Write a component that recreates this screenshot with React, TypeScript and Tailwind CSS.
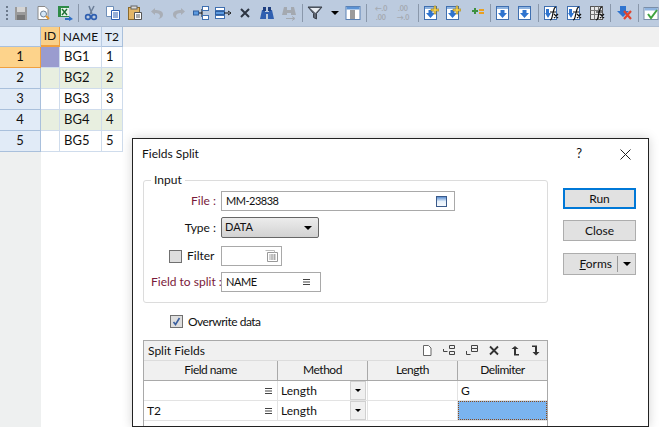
import React from 'react'

const Sep = () => <div className="w-px h-[18px] bg-[#8a98ab] -mx-[1.5px] shrink-0" />

const Ico = ({ w = 16, className = '', children }: { w?: number; className?: string; children: React.ReactNode }) => (
  <svg width={w} height="16" viewBox={`0 0 ${w} 16`} className={`shrink-0 ${className}`}>
    {children}
  </svg>
)

const BlueDown = () => (
  <>
    <rect x="1.5" y="1.5" width="12" height="13" fill="#fff" stroke="#3f6fb0" />
    <rect x="2" y="2" width="11" height="2" fill="#8fb4e0" />
    <path d="M5.5 5h4v3h2.5l-4.5 5L3 8h2.5z" fill="#2f74cf" />
  </>
)

const Fx = ({ grid }: { grid?: boolean }) => (
  <>
    <rect x="1.5" y="1.5" width="12" height="13" fill={grid ? '#e8e8e8' : '#fff'} stroke={grid ? '#555' : '#3f6fb0'} />
    {grid ? (
      <path d="M1.5 5.5h12M1.5 9.5h12M5.5 1.5v13M9.5 1.5v13" stroke="#777" />
    ) : (
      <path d="M3 4h3v4h2l-3 5-3-5h1z" fill="#2f74cf" />
    )}
    <path d="M7 15c2 0 2-3 3-7s1-6 3-6M7 7h6M11 9l4 4M15 9l-4 4" stroke="#111" strokeWidth="1.2" fill="none" />
  </>
)

const toolbar: React.ReactNode[] = [
  <Ico key="save">
    <path d="M2 2h12v13H2z" fill="#9a9a9a" />
    <rect x="4" y="2" width="8" height="5" fill="#d4d4d4" />
    <rect x="4" y="10" width="8" height="5" fill="#777" />
  </Ico>,
  <Ico key="preview">
    <path d="M3 1.5h7l3 3v10H3z" fill="#fff" stroke="#8a8a8a" />
    <circle cx="8.5" cy="9" r="3" fill="#d5e7f7" stroke="#6a7f95" />
    <path d="M11 11l3 3" stroke="#e69a2e" strokeWidth="2" />
  </Ico>,
  <Ico key="excel">
    <rect x="1" y="1" width="11" height="11" fill="#2e8b47" />
    <rect x="4" y="3" width="8" height="8" fill="#e8f3ea" />
    <path d="M5 4l5 6M10 4l-5 6" stroke="#1e7034" strokeWidth="1.4" />
    <path d="M8 13h4v-2l4 3-4 2v-1H8z" fill="#2f6fc5" />
  </Ico>,
  <Sep key="s1" />,
  <Ico key="cut">
    <path d="M6 1l3 8M11 1L7 9" stroke="#6c7f98" strokeWidth="1.5" />
    <circle cx="5" cy="12" r="2.4" fill="none" stroke="#2f5fb0" strokeWidth="1.6" />
    <circle cx="11" cy="12" r="2.4" fill="none" stroke="#2f5fb0" strokeWidth="1.6" />
  </Ico>,
  <Ico key="copy">
    <path d="M1.5 1.5h7v10h-7z" fill="#fff" stroke="#6f8fb8" />
    <path d="M6.5 5.5h8v9h-8z" fill="#fff" stroke="#2f5fb0" />
    <path d="M8 8h5M8 10h5M8 12h5" stroke="#2f5fb0" />
  </Ico>,
  <Ico key="paste">
    <rect x="1.5" y="2.5" width="11" height="12" fill="#e3b667" stroke="#8b6a2c" />
    <rect x="4" y="1" width="6" height="3" fill="#d9d9d9" stroke="#666" />
    <path d="M7.5 7.5h7v7h-7z" fill="#fff" stroke="#555" />
    <path d="M9 10h4M9 12h4" stroke="#555" />
  </Ico>,
  <Ico key="undo">
    <path d="M6 3L2 6.5 6 10V8c3 0 5 1 5 3 0 1.500-1 2.500-2 3 3-.5 5-2 5-4.500C14 6 10 5 6 5z" fill="#a9aeb6" />
  </Ico>,
  <Ico key="redo">
    <path d="M10 3l4 3.500L10 10V8c-3 0-5 1-5 3 0 1.500 1 2.500 2 3-3-.5-5-2-5-4.500C2 6 6 5 10 5z" fill="#a9aeb6" />
  </Ico>,
  <Ico key="split">
    <rect x="0.500" y="6" width="5" height="4" fill="#5d9be0" stroke="#2f5fa0" />
    <path d="M6 8h3M9 4v8" stroke="#111" />
    <rect x="9.500" y="1.500" width="6" height="4" fill="#fff" stroke="#3f6fb0" />
    <rect x="9.500" y="10.500" width="6" height="4" fill="#fff" stroke="#3f6fb0" />
  </Ico>,
  <Ico key="merge">
    <rect x="0.500" y="2.500" width="9" height="3" fill="#fff" stroke="#3f6fb0" />
    <rect x="0.500" y="6.500" width="9" height="3" fill="#5d9be0" stroke="#2f5fa0" />
    <rect x="0.500" y="10.500" width="9" height="3" fill="#fff" stroke="#3f6fb0" />
    <path d="M9 8h5M13 6l3 2-3 2" stroke="#111" fill="none" />
  </Ico>,
  <Ico key="x">
    <path d="M4 4l8 8M12 4l-8 8" stroke="#2d3542" strokeWidth="2" />
  </Ico>,
  <Ico key="find">
    <path d="M3 5h3v2h4V5h3l2 9H9V9H7v5H1z" fill="#2f5fb0" />
    <rect x="4" y="2" width="3" height="4" fill="#1f3f80" />
    <rect x="9" y="2" width="3" height="4" fill="#1f3f80" />
  </Ico>,
  <Ico key="findnext">
    <path d="M3 2h3v8H1zM10 2h3l2 8h-5zM6 5h4v3H6z" fill="#a4a9b0" />
    <path d="M5 13.500h8M11 11.500l3 2-3 2" stroke="#a4a9b0" fill="none" />
  </Ico>,
  <Sep key="s2" />,
  <Ico key="filter">
    <path d="M1 2h14L9.500 8.500V14l-3-1.500v-4z" fill="#5d6470" stroke="#3a404a" />
    <path d="M3 3h10L8.500 8z" fill="#e9edf2" />
  </Ico>,
]

const toolbarRight: React.ReactNode[] = [
  <Ico key="table">
    <rect x="1" y="1.500" width="14" height="13" fill="#fff" stroke="#5b82b5" />
    <rect x="1.500" y="2" width="13" height="2.500" fill="#5b92d4" />
    <rect x="5" y="5" width="5" height="9" fill="#9b9b9b" />
  </Ico>,
  <Sep key="s3" />,
  <div key="d1" className="w-[20px] flex flex-col items-center text-[7px] leading-[9px] font-bold text-[#a4a9b0] shrink-0">
    <span>←.0</span>
    <span>.00</span>
  </div>,
  <div key="d2" className="w-[20px] -ml-[4px] flex flex-col items-center text-[7px] leading-[9px] font-bold text-[#a4a9b0] shrink-0">
    <span>.00</span>
    <span>→.0</span>
  </div>,
  <Sep key="s4" />,
  <Ico key="add1">
    <BlueDown />
    <path d="M11 1h2v3h3v2h-3v3h-2V6H8V4h3z" fill="#f3d050" stroke="#9a7d1c" strokeWidth=".6" />
  </Ico>,
  <Ico key="add2">
    <BlueDown />
    <path d="M11 1h2v3h3v2h-3v3h-2V6H8V4h3z" fill="#f3d050" stroke="#9a7d1c" strokeWidth=".6" />
  </Ico>,
  <Ico key="plus" className="ml-[2px]">
    <path d="M3 5h2V3h2v2h2v2H7v2H5V7H3z" fill="#3d9140" />
    <path d="M10 4h5v2h-5zM10 7h5v2h-5z" fill="#eaa022" />
  </Ico>,
  <Sep key="s5" />,
  <Ico key="down1">
    <BlueDown />
  </Ico>,
  <Ico key="down2">
    <BlueDown />
  </Ico>,
  <Sep key="s6" />,
  <Ico key="fx1">
    <Fx />
  </Ico>,
  <Ico key="fx2" className="ml-[1px]">
    <Fx />
  </Ico>,
  <Ico key="fx3" className="ml-[1px]">
    <Fx grid />
  </Ico>,
  <Sep key="s7" />,
  <Ico key="del" className="ml-[2px]">
    <path d="M3 1h6v5h3l-6 6-6-6h3z" fill="#2f74cf" />
    <path d="M7 6l7 8M14 6l-7 8" stroke="#e0442e" strokeWidth="2.200" />
  </Ico>,
  <Sep key="s8" />,
  <Ico key="check">
    <rect x="1" y="2.500" width="14" height="12" fill="#fff" stroke="#7a8ea8" />
    <rect x="1.500" y="3" width="13" height="2.500" fill="#8fb4e0" />
    <path d="M5 9l3 4 6-8" stroke="#3fa33f" strokeWidth="2" fill="none" />
  </Ico>,
]

const rows = [
  { n: 1, name: 'BG1', t2: '1' },
  { n: 2, name: 'BG2', t2: '2' },
  { n: 3, name: 'BG3', t2: '3' },
  { n: 4, name: 'BG4', t2: '4' },
  { n: 5, name: 'BG5', t2: '5' },
]

const FieldIcon = () => (
  <svg width="9" height="8" viewBox="0 0 9 8" className="shrink-0">
    <path d="M1 1.500h7M1 4h7M1 6.500h7" stroke="#444" />
  </svg>
)

const Box = ({ className, children }: { className: string; children?: React.ReactNode }) => (
  <div className={`h-[20px] border border-[#a9a9a9] bg-white flex items-center ${className}`}>{children}</div>
)

const Checkbox = ({ checked }: { checked?: boolean }) => (
  <span className="w-[13px] h-[13px] border border-[#707070] bg-[#dedede] flex items-center justify-center shrink-0">
    {checked && (
      <svg width="9" height="9" viewBox="0 0 9 9">
        <path d="M1.500 5l2 2.500L7.500 1" stroke="#3a5f9f" strokeWidth="1.600" fill="none" />
      </svg>
    )}
  </span>
)

const Caret = () => <span className="w-0 h-0 block border-x-[4px] border-x-transparent border-t-[4px] border-t-black" />

const Button = ({ primary, children }: { primary?: boolean; children: React.ReactNode }) => (
  <div
    className={`w-[73px] h-[21px] bg-[#e1e1e1] flex items-center justify-center ${
      primary ? 'border-2 border-[#0078d7]' : 'border border-[#adadad]'
    }`}
  >
    {children}
  </div>
)

const grid = 'grid grid-cols-[134px_90px_90px_89px]'

const MethodCell = () => (
  <div className="border-r border-[#e3e3e3] flex items-center pl-[3px]">
    <span className="flex-1">Length</span>
    <span className="w-[16px] h-[19px] bg-[#f0f0f0] border border-[#d0d0d0] flex items-center justify-center mr-[1px]">
      <span className="w-0 h-0 block border-x-[3px] border-x-transparent border-t-[3px] border-t-black" />
    </span>
  </div>
)

export default function App() {
  return (
    <div
      className="w-[659px] h-[427px] relative overflow-hidden bg-white text-[12px] text-[#111] flex flex-col"
      style={{ fontFamily: 'Lato, "Noto Sans", sans-serif' }}
    >
      <div className="h-[27px] bg-[#bccbdf] flex items-center pl-[6px] border-b border-[#aebdd1] shrink-0">
        <div className="w-[3px] h-[14px] mr-[5px] flex flex-col justify-between">
          <span className="w-[2px] h-[2px] bg-[#6c7a8c]" />
          <span className="w-[2px] h-[2px] bg-[#6c7a8c]" />
          <span className="w-[2px] h-[2px] bg-[#6c7a8c]" />
          <span className="w-[2px] h-[2px] bg-[#6c7a8c]" />
        </div>
        <div className="flex items-center gap-[6px]">{toolbar}</div>
        <span className="ml-[8px] mr-[6px]">
          <Caret />
        </span>
        <div className="flex items-center gap-[6px]">{toolbarRight}</div>
      </div>

      <div className="flex flex-1 min-h-0">
        <div className="w-[123px] shrink-0 flex flex-col">
          <div className="grid grid-cols-[41px_19px_42px_21px] h-[20px] bg-[#e1ebf7] shrink-0">
            <div className="border-b border-r border-[#a9c0dc]" />
            <div className="bg-[#f9d08a] border-b-2 border-r border-[#f0a040] flex items-center justify-center">ID</div>
            <div className="border-b border-r border-[#b9cce4] flex items-center justify-center">NAME</div>
            <div className="border-b border-r border-[#a9c0dc] flex items-center justify-center">T2</div>
          </div>
          {rows.map((r) => {
            const even = r.n % 2 === 0
            const selected = r.n === 1
            const cell = `border-b border-r border-[#cfdcec] flex items-center ${even ? 'bg-[#e8efe0]' : 'bg-white'}`
            return (
              <div key={r.n} className="grid grid-cols-[41px_19px_42px_21px] h-[21px] text-[13px] shrink-0">
                <div
                  className={`flex items-center justify-center border-r border-b ${
                    selected ? 'bg-[#fdd38b] border-[#f0a040]' : 'bg-[#e1ebf7] border-[#a9c0dc]'
                  }`}
                >
                  {r.n}
                </div>
                <div className={selected ? 'bg-[#9a9ccf] border-b border-r border-[#cfdcec]' : cell} />
                <div className={`${cell} pl-[4px]`}>{r.name}</div>
                <div className={`${cell} pl-[4px]`}>{r.t2}</div>
              </div>
            )
          })}
          <div className="flex-1 flex">
            <div className="w-[41px] bg-[#eef0f0]" />
          </div>
        </div>
        <div className="flex-1 flex flex-col">
          <div className="h-[20px] bg-[#f0f0f0]" />
        </div>
      </div>

      <div className="absolute left-[132px] top-[138px] w-[517px] h-[289px] bg-white border border-[#222] shadow-[0_0_10px_rgba(0,0,0,0.18)] flex flex-col">
        <div className="h-[30px] mb-[4px] flex items-center pl-[9px] pr-[17px] shrink-0">
          <span className="flex-1">Fields Split</span>
          <span className="mr-[38px] text-[13px]">?</span>
          <svg width="11" height="11" viewBox="0 0 11 11">
            <path d="M.5.500l10 10M10.500.500l-10 10" stroke="#222" />
          </svg>
        </div>
        <div className="flex pl-[10px]">
          <div className="w-[405px] shrink-0">
            <fieldset className="h-[130px] border border-[#dcdcdc] rounded-[3px] pl-[7px] pr-[10px]">
              <legend className="px-[3px] leading-[14px]">Input</legend>
              <div className="grid grid-cols-[65px_1fr] items-center gap-x-[5px] mt-[4px] gap-y-[6px]">
                <span className="text-right text-[#7a1a3a]">File :</span>
                <Box className="w-[234px] pl-[4px] pr-[7px] justify-between">
                  <span className="text-[11px] tracking-[-0.5px]">MM-23838</span>
                  <span className="w-[11px] h-[11px] border border-[#3a5a8a] bg-gradient-to-b from-[#5d8fd0] via-[#e6f0fa] to-[#f5f9fd]" />
                </Box>
                <span className="text-right">Type :</span>
                <div className="w-[98px] h-[21px] border border-[#666] rounded-[2px] bg-gradient-to-b from-[#ececec] to-[#d2d2d2] flex items-center justify-between pl-[3px] pr-[6px]">
                  <span className="text-[11px]">DATA</span>
                  <Caret />
                </div>
                <div className="flex items-center justify-end gap-[5px] mt-[2px]">
                  <Checkbox />
                  <span className="w-[29px]">Filter</span>
                </div>
                <Box className="w-[61px] justify-end pr-[3px] mt-[2px]">
                  <svg width="13" height="12" viewBox="0 0 13 12">
                    <path d="M2.500 2.500h10v9h-10z" fill="#fff" stroke="#999" />
                    <path d="M.5.500h9v2" fill="none" stroke="#bbb" />
                    <path d="M4 5h7M4 7h7M4 9h7M7 4v6M9.500 4v6" stroke="#aaa" />
                  </svg>
                </Box>
                <span className="text-right text-[#7a1a3a] whitespace-nowrap">Field to split :</span>
                <Box className="w-[100px] pl-[4px] pr-[9px] justify-between">
                  <span className="text-[11px] tracking-[-0.4px]">NAME</span>
                  <FieldIcon />
                </Box>
              </div>
            </fieldset>
            <div className="h-[37px] flex items-center gap-[5px] pl-[27px]">
              <Checkbox checked />
              <span className="tracking-[-0.5px]">Overwrite data</span>
            </div>
            <div className="border border-[#a9a9a9] border-b-0 h-[86px]">
              <div className="h-[20px] bg-[#f0f0f0] flex items-center pl-[4px] pr-[6px] border-b border-[#dcdcdc]">
                <span className="flex-1">Split Fields</span>
                <div className="flex items-center gap-[11px]">
                  <svg width="10" height="11" viewBox="0 0 10 11">
                    <path d="M1.500.500h5l2.500 2.500v7.500h-7.500z" fill="#fff" stroke="#666" />
                  </svg>
                  <svg width="12" height="11" viewBox="0 0 12 11">
                    <path d="M.5 4v2.500h4M6.500.500h5v3h-5zM6.500 6.500h5v3h-5z" fill="none" stroke="#444" />
                  </svg>
                  <svg width="12" height="11" viewBox="0 0 12 11">
                    <path d="M.5 6v3.500h4M5.500.500h6v3h-6zM5.500 3.500h6v3h-6z" fill="none" stroke="#444" />
                  </svg>
                  <svg width="10" height="11" viewBox="0 0 10 11">
                    <path d="M1 1.500l8 8M9 1.500l-8 8" stroke="#333" strokeWidth="1.800" />
                  </svg>
                  <svg width="10" height="11" viewBox="0 0 10 11">
                    <path d="M5 1l3.500 3H6v5h3v1.500H4V4H1.500z" fill="#333" />
                  </svg>
                  <svg width="10" height="11" viewBox="0 0 10 11">
                    <path d="M1 .500h5V7h2.500L5 10.500 1.500 7H4V2H1z" fill="#333" />
                  </svg>
                </div>
              </div>
              <div className={`${grid} h-[20px] bg-[#f0f0f0] border-b border-[#a9a9a9] text-center tracking-[-0.5px]`}>
                <div className="border-r border-[#a9a9a9]">Field name</div>
                <div className="border-r border-[#a9a9a9]">Method</div>
                <div className="border-r border-[#a9a9a9]">Length</div>
                <div>Delimiter</div>
              </div>
              <div className={`${grid} h-[20px] border-b border-[#e3e3e3]`}>
                <div className="border-r border-[#e3e3e3] flex items-center justify-end pr-[4px]">
                  <FieldIcon />
                </div>
                <MethodCell />
                <div className="border-r border-[#e3e3e3]" />
                <div className="flex items-center pl-[3px]">G</div>
              </div>
              <div className={`${grid} h-[20px] border-b border-[#e3e3e3]`}>
                <div className="border-r border-[#e3e3e3] flex items-center justify-between pl-[3px] pr-[4px]">
                  <span>T2</span>
                  <FieldIcon />
                </div>
                <MethodCell />
                <div className="border-r border-[#e3e3e3]" />
                <div className="bg-[#7ab4f0] border border-dotted border-[#8a4a1a]" />
              </div>
            </div>
          </div>
          <div className="pl-[15px] pt-[15px] flex flex-col gap-[11px]">
            <Button primary>Run</Button>
            <Button>Close</Button>
            <div className="mt-[1px] w-[73px] h-[22px] bg-[#e1e1e1] border border-[#adadad] flex items-center">
              <span className="flex-1 text-right pr-[5px]">
                <span className="underline">F</span>orms
              </span>
              <span className="w-px h-[16px] bg-white border-r border-[#999]" />
              <span className="w-[17px] flex justify-center">
                <Caret />
              </span>
            </div>
          </div>
        </div>
      </div>
    </div>
  )
}
